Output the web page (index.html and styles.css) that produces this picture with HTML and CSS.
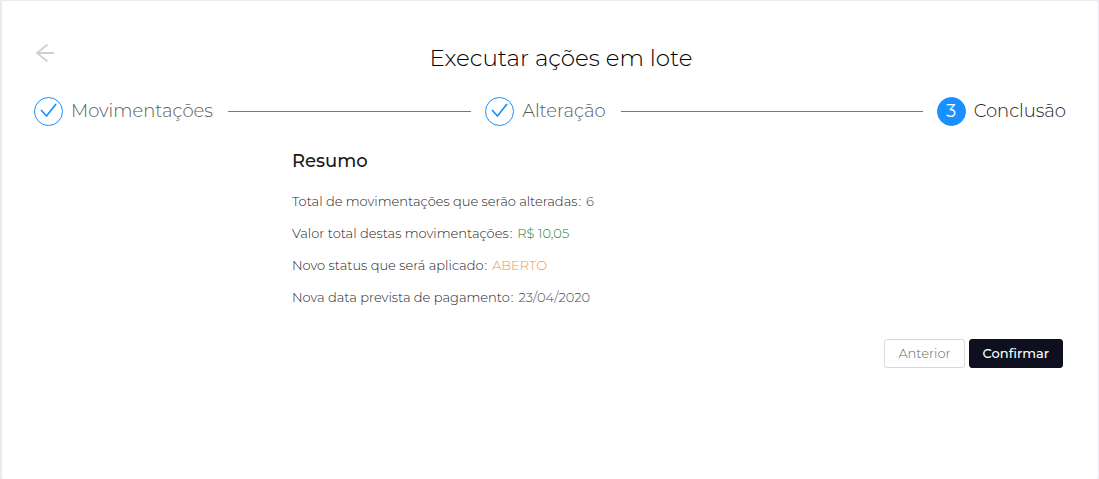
FILE: index.html
```html
<!DOCTYPE html>
<html lang="pt-BR">
<head>
    <meta charset="UTF-8">
    <meta name="viewport" content="width=device-width, initial-scale=1.0">
    <title>Executar ações em lote</title>
    <link rel="stylesheet" href="styles.css">
</head>
<body>
    <main class="card">
        <header class="header">
            <button type="button" class="back" aria-label="Voltar">
                <svg width="20" height="20" viewBox="0 0 20 20" fill="none" stroke="currentColor" stroke-width="1.8">
                    <path d="M19 10H1.500M12.500 1.500L2 10l10.500 8.500"/>
                </svg>
            </button>
            <h1>Executar ações em lote</h1>
        </header>

        <ol class="steps">
            <li class="step">
                <span class="step-icon">
                    <svg width="18" height="18" viewBox="0 0 18 18" fill="none" stroke="currentColor" stroke-width="1.7">
                        <path d="M1 7L6.500 13L16 1"/>
                    </svg>
                </span>
                <span class="step-title">Movimentações</span>
            </li>
            <li class="step">
                <span class="step-icon">
                    <svg width="18" height="18" viewBox="0 0 18 18" fill="none" stroke="currentColor" stroke-width="1.7">
                        <path d="M1 7L6.500 13L16 1"/>
                    </svg>
                </span>
                <span class="step-title">Alteração</span>
            </li>
            <li class="step active">
                <span class="step-icon">3</span>
                <span class="step-title">Conclusão</span>
            </li>
        </ol>

        <section class="summary">
            <h2>Resumo</h2>
            <dl>
                <div class="row">
                    <dt>Total de movimentações que serão alteradas</dt>
                    <dd>6</dd>
                </div>
                <div class="row">
                    <dt>Valor total destas movimentações</dt>
                    <dd class="green">R$ 10,05</dd>
                </div>
                <div class="row">
                    <dt>Novo status que será aplicado</dt>
                    <dd class="orange">ABERTO</dd>
                </div>
                <div class="row">
                    <dt>Nova data prevista de pagamento</dt>
                    <dd>23/04/2020</dd>
                </div>
            </dl>
        </section>

        <div class="actions">
            <button type="button" class="btn">Anterior</button>
            <button type="button" class="btn btn-primary">Confirmar</button>
        </div>
    </main>
</body>
</html>
```

FILE: styles.css
```css
* {
    box-sizing: border-box;
}
body {
    margin: 0;
    padding: 1px 1px 0 2px;
    background-color: #eaeaf0;
    font-family: Montserrat, Inter, sans-serif;
    font-size: 13px;
    font-weight: 300;
    color: #1a1a1a;
}
.card {
    min-height: calc(100vh - 1px);
    padding: 40px 32px;
    background-color: white;
    border-radius: 2px;
}
.header {
    display: grid;
    grid-template-columns: 22px 1fr;
    align-items: start;
}
.back {
    display: flex;
    padding: 2px 0 0 1px;
    border: none;
    background: none;
    color: #d0d0d0;
    cursor: pointer;
}
h1 {
    margin: 0;
    font-size: 23px;
    font-weight: 300;
    line-height: 34px;
    text-align: center;
    color: black;
}
.steps {
    display: flex;
    gap: 14px;
    margin: 22px 0 0;
    padding: 0;
    list-style: none;
    font-size: 18px;
    line-height: 29px;
}
.step {
    display: flex;
    flex: 1;
    align-items: center;
    gap: 8px;
    color: #595959;
}
.step:last-child {
    flex: none;
}
.step:not(:last-child)::after {
    content: "";
    flex: 1;
    height: 1px;
    margin-left: 7px;
    background-color: #1890ff;
}
.step-icon {
    display: flex;
    align-items: center;
    justify-content: center;
    width: 29px;
    height: 29px;
    border: 1px solid #1890ff;
    border-radius: 50%;
    color: #1890ff;
}
.active {
    color: #1a1a1a;
}
.active .step-icon {
    background-color: #1890ff;
    color: white;
    font-weight: 400;
}
.summary {
    margin: 21px 0 0 25%;
}
h2 {
    margin: 0 0 10px;
    font-size: 18px;
    font-weight: 500;
    line-height: 28px;
}
dl {
    margin: 0;
}
.row {
    display: flex;
    line-height: 32px;
}
dt::after {
    content: ":";
    margin: 0 5px 0 1px;
}
dd {
    margin: 0;
    color: #4d4d4d;
}
.green {
    color: #2a7d2e;
}
.orange {
    color: #f09050;
}
.actions {
    display: flex;
    justify-content: flex-end;
    gap: 4px;
    margin: 26px 3px 0 0;
}
.btn {
    height: 29px;
    padding: 0 13px 2px;
    border: 1px solid #d9d9d9;
    border-radius: 3px;
    background-color: white;
    color: #666666;
    font: inherit;
    cursor: pointer;
}
.btn-primary {
    border-color: #0e1020;
    background-color: #0e1020;
    color: white;
    font-weight: 500;
}
```
